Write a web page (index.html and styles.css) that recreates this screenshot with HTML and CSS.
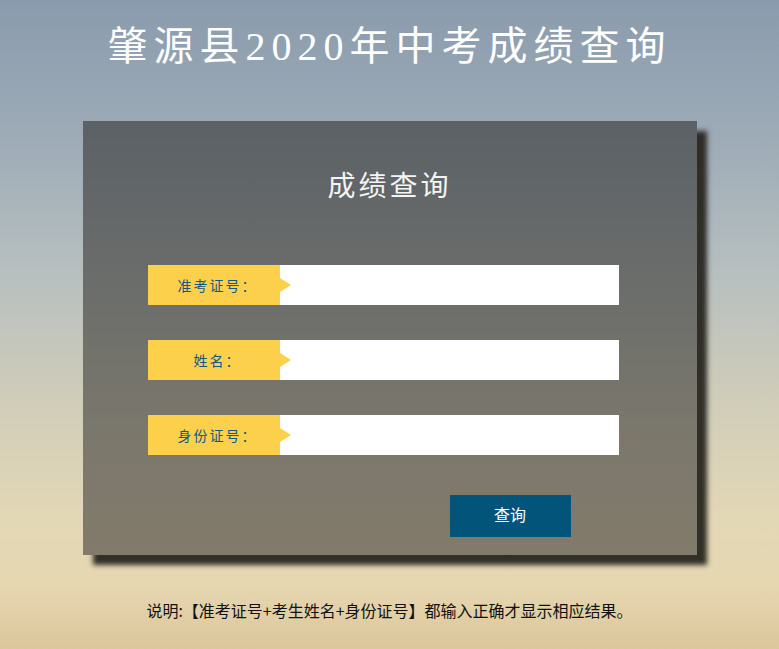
FILE: index.html
```html
<!DOCTYPE html>
<html lang="zh-CN">
<head>
<meta charset="utf-8">
<title>肇源县2020年中考成绩查询</title>
<link rel="stylesheet" href="styles.css">
</head>
<body>
<div class="page">
  <h1 class="site-title">肇源县2020年中考成绩查询</h1>
  <div class="card">
    <h2 class="card-title">成绩查询</h2>
    <form class="query-form">
      <div class="row">
        <label class="row-label">准考证号：</label>
        <input class="row-input" type="text">
      </div>
      <div class="row">
        <label class="row-label">姓名：</label>
        <input class="row-input" type="text">
      </div>
      <div class="row">
        <label class="row-label">身份证号：</label>
        <input class="row-input" type="text">
      </div>
      <button class="submit" type="button">查询</button>
    </form>
  </div>
  <p class="note">说明:【准考证号+考生姓名+身份证号】都输入正确才显示相应结果。</p>
</div>
</body>
</html>
```

FILE: styles.css
```css
html, body {
  margin: 0;
  padding: 0;
}
body {
  width: 779px;
  height: 649px;
  overflow: hidden;
  font-family: "Liberation Sans", "Noto Sans CJK SC", sans-serif;
  background: linear-gradient(to bottom, #8a9bad 0%, #9eacb7 22%, #b7bfbf 42%, #d0cdb9 62%, #e3d8b6 80%, #e6d7b1 90%, #dcc69b 100%);
}
.page {
  display: flex;
  flex-direction: column;
  align-items: center;
  padding-top: 23px;
}
.site-title {
  margin: 0;
  font-family: "Liberation Serif", "Noto Sans CJK SC", serif;
  font-weight: normal;
  font-size: 40px;
  line-height: 48px;
  letter-spacing: 6px;
  color: #ffffff;
}
.card {
  margin-top: 50px;
  width: 614px;
  height: 434px;
  box-sizing: border-box;
  padding: 45px 0 0 65px;
  background: linear-gradient(to bottom, #5b6166 0%, #6c6e6b 40%, #7a776c 70%, #827b6b 100%);
  box-shadow: 10px 10px 5px rgba(40, 38, 32, 0.95);
}
.card-title {
  margin: 0 0 63px -65px;
  text-align: center;
  font-family: "Noto Sans CJK SC", sans-serif;
  font-weight: normal;
  font-size: 28px;
  line-height: 36px;
  letter-spacing: 3px;
  color: #f4f4f4;
}
.query-form {
  display: flex;
  flex-direction: column;
  width: 471px;
  margin: 0;
}
.row {
  display: flex;
  height: 40px;
  margin-bottom: 35px;
}
.row-label {
  position: relative;
  width: 132px;
  flex: none;
  box-sizing: border-box;
  padding-left: 8px;
  background: #fdd04b;
  color: #0f568a;
  font-family: "Noto Sans CJK SC", sans-serif;
  font-size: 14px;
  letter-spacing: 2px;
  line-height: 40px;
  text-align: center;
}
.row-label::after {
  content: "";
  position: absolute;
  left: 132px;
  top: 13px;
  width: 0;
  height: 0;
  border-left: 11px solid #fdd04b;
  border-top: 7px solid transparent;
  border-bottom: 7px solid transparent;
}
.row-input {
  flex: 1;
  border: none;
  margin: 0;
  padding: 0 0 0 16px;
  background: #ffffff;
  outline: none;
  font-size: 14px;
}
.submit {
  margin: 5px 0 0 302px;
  width: 121px;
  height: 42px;
  border: none;
  padding: 0 0 4px 0;
  background: #02547b;
  color: #ffffff;
  font-family: "Noto Sans CJK SC", sans-serif;
  font-size: 16px;
  cursor: pointer;
}
.note {
  margin: 43px 0 0 0;
  font-family: "Noto Sans CJK SC", sans-serif;
  font-size: 16px;
  line-height: 24px;
  color: #111111;
}
```
